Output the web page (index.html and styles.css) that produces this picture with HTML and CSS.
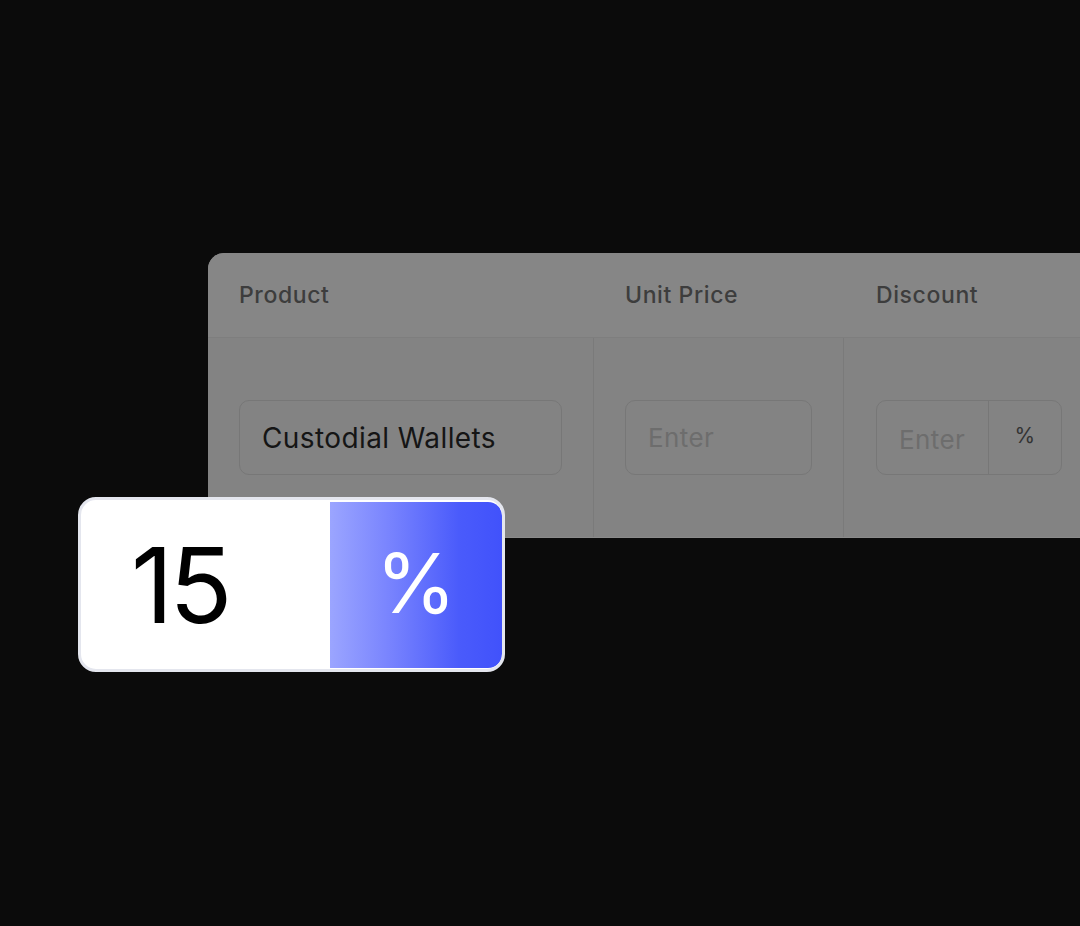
FILE: index.html
```html
<!DOCTYPE html>
<html>
	<head>
		<meta charset="utf-8" />
		<title>Discount</title>
		<link rel="stylesheet" href="styles.css">
	</head>
	<body>
		<div class="stage">
			<div class="sheet">
				<div class="row head">
					<div class="cell c1">Product</div>
					<div class="cell c2">Unit Price</div>
					<div class="cell c3">Discount</div>
				</div>
				<div class="row body">
					<div class="cell c1 line">
						<div class="field">Custodial Wallets</div>
					</div>
					<div class="cell c2 line">
						<div class="field ph">Enter</div>
					</div>
					<div class="cell c3 line">
						<div class="field split">
							<span class="ph">Enter</span>
							<span class="unit">%</span>
						</div>
					</div>
				</div>
			</div>

			<div class="badge">
				<div class="num">15</div>
				<div class="pct">%</div>
			</div>
		</div>
	</body>
</html>
```
FILE: styles.css
```css
html,body
{
	margin: 0;
	padding: 0;
	height: 100%;
}

body
{
	background-color: #0b0b0b;
	font-family: Inter, "Noto Sans", sans-serif;
	overflow: hidden;
}

.stage
{
	position: relative;
	width: 1080px;
	height: 926px;
	padding-top: 253px;
	padding-left: 208px;
	box-sizing: border-box;
	overflow: hidden;
}

.sheet
{
	width: 872px;
	background-color: #838383;
	border-radius: 16px 0 0 16px;
	overflow: hidden;
}

.row
{
	display: flex;
}

.head
{
	height: 84px;
	background-color: #868686;
	border-bottom: 1px solid #7e7e7e;
	align-items: center;
	color: #3d3d3d;
	font-size: 23px;
	font-weight: 500;
	letter-spacing: 0.6px;
}

.body
{
	height: 199px;
	border-bottom: 1px solid #8b8b8b;
}

.cell
{
	box-sizing: border-box;
	padding-left: 31px;
	padding-right: 31px;
	flex-shrink: 0;
}

.c1 { width: 385px; }
.c2 { width: 250px; padding-left: 32px; }
.c3 { width: 250px; padding-left: 33px; }

.line
{
	display: flex;
	align-items: center;
}

.c2.line, .c3.line
{
	border-left: 1px solid #7a7a7a;
}

.c2.line { padding-left: 31px; }
.c3.line { padding-left: 32px; }

.field
{
	width: 100%;
	height: 75px;
	box-sizing: border-box;
	border: 1px solid #777777;
	border-radius: 10px;
	display: flex;
	align-items: center;
	padding-left: 22px;
	font-size: 28px;
	color: #151515;
	letter-spacing: 0.4px;
}

.c2 .field { width: 188px; }

.ph
{
	color: #6d6d6d;
	font-size: 26px;
}

.split
{
	width: 187px;
	padding-left: 0;
}

.split .ph
{
	width: 112px;
	box-sizing: border-box;
	padding-left: 22px;
	height: 100%;
	display: flex;
	align-items: center;
	padding-top: 3px;
	border-right: 1px solid #777777;
}

.unit
{
	flex: 1;
	text-align: center;
	font-size: 21px;
	color: #333333;
	padding-bottom: 4px;
}

.badge
{
	position: absolute;
	left: 78px;
	top: 497px;
	width: 427px;
	height: 175px;
	box-sizing: border-box;
	border: 3px solid #e4e6ee;
	border-radius: 18px;
	background-color: #ffffff;
	padding: 2px 0 1px 0;
	display: flex;
	overflow: hidden;
}

.num
{
	width: 249px;
	display: flex;
	align-items: center;
	padding-left: 50px;
	box-sizing: border-box;
	font-size: 104px;
	font-weight: 400;
	color: #000000;
	letter-spacing: -4px;
}

.pct
{
	flex: 1;
	background: linear-gradient(90deg, #9ba5ff 0%, #7883fe 35%, #4a5bfb 75%, #4152fb 100%);
	border-radius: 0 14px 14px 0;
	color: #ffffff;
	display: flex;
	align-items: center;
	justify-content: center;
	font-size: 82px;
	font-weight: 400;
	padding-bottom: 4px;
}
```
